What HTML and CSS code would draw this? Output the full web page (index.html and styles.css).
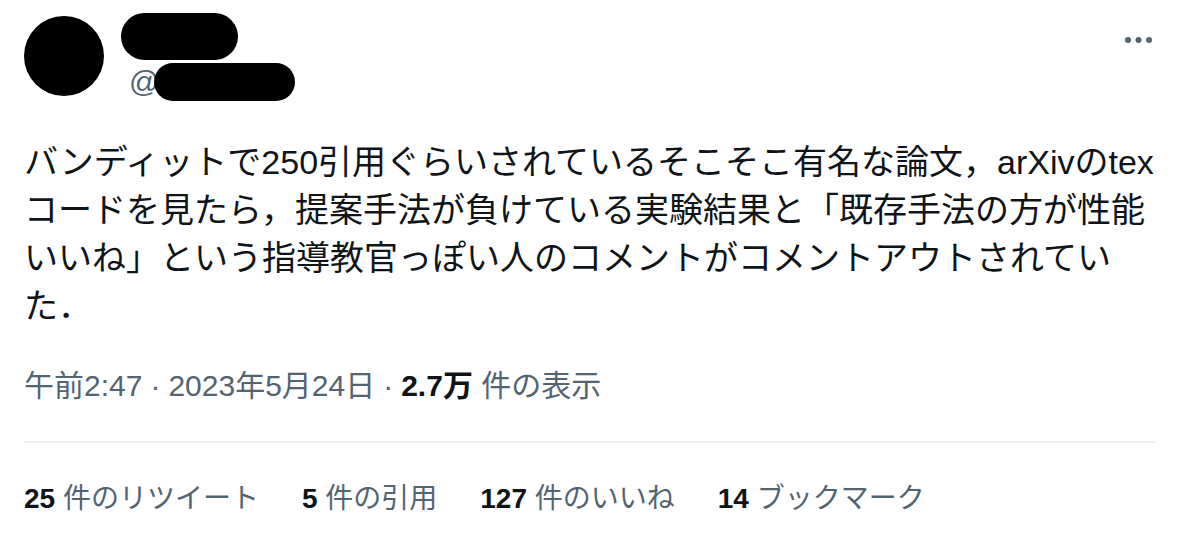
FILE: index.html
```html
<!DOCTYPE html>
<html lang="ja">
<head>
<meta charset="utf-8">
<title>Tweet</title>
<link rel="stylesheet" href="styles.css">
</head>
<body>
<article class="tweet">
  <header class="tweet-header">
    <div class="avatar"></div>
    <div class="user">
      <div class="name-redact"></div>
      <div class="handle-row"><span class="at">@</span><span class="handle-redact"></span></div>
    </div>
    <button class="more" aria-label="その他">
      <svg width="30" height="10" viewBox="0 0 30 10"><circle cx="4" cy="5" r="3"/><circle cx="14.5" cy="5" r="3"/><circle cx="25" cy="5" r="3"/></svg>
    </button>
  </header>
  <p class="tweet-text">バンディットで250引用ぐらいされているそこそこ有名な論文，arXivのtexコードを見たら，提案手法が負けている実験結果と「既存手法の方が性能いいね」という指導教官っぽい人のコメントがコメントアウトされていた．</p>
  <div class="meta">
    <span>午前2:47</span><span class="dot">·</span><span>2023年5月24日</span><span class="dot">·</span><span><b class="strong">2.7万</b> 件の表示</span>
  </div>
  <div class="divider"></div>
  <div class="stats">
    <span class="stat"><b class="strong">25</b> 件のリツイート</span>
    <span class="stat"><b class="strong">5</b> 件の引用</span>
    <span class="stat"><b class="strong">127</b> 件のいいね</span>
    <span class="stat"><b class="strong">14</b> ブックマーク</span>
  </div>
</article>
</body>
</html>
```

FILE: styles.css
```css
html, body {
  margin: 0;
  padding: 0;
  background: #ffffff;
}

body {
  font-family: "Liberation Sans", "Noto Sans CJK JP", sans-serif;
  color: #0f1419;
}

.tweet {
  padding: 16px 22px 0 24px;
}

.tweet-header {
  display: flex;
  align-items: flex-start;
}

.avatar {
  width: 80px;
  height: 80px;
  border-radius: 50%;
  background: #000;
  flex: none;
}

.user {
  margin-left: 17px;
  flex: 1;
}

.name-redact {
  width: 117px;
  height: 47px;
  border-radius: 24px;
  background: #000;
  margin-top: -3px;
}

.handle-row {
  display: flex;
  align-items: center;
  margin-top: 3px;
}

.at {
  color: #536471;
  font-size: 30px;
  line-height: 38px;
  margin-left: 8px;
}

.handle-redact {
  width: 141px;
  height: 38px;
  border-radius: 19px;
  background: #000;
  margin-left: -5px;
}

.more {
  border: 0;
  background: none;
  padding: 0;
  margin: 19px 2px 0 0;
  fill: #536471;
  line-height: 0;
}

.tweet-text {
  margin: 37px 0 0 0;
  width: 1140px;
  font-size: 34px;
  line-height: 48px;
  color: #0f1419;
  word-break: normal;
  line-break: strict;
}

.meta {
  margin-top: 36px;
  font-size: 30px;
  line-height: 40px;
  color: #536471;
}

.dot {
  margin: 0 8px;
}

.strong {
  font-weight: 700;
  color: #0f1419;
}

.divider {
  margin-top: 35px;
  height: 2px;
  background: #eff3f4;
}

.stats {
  display: flex;
  margin-top: 38px;
  font-size: 28px;
  line-height: 36px;
  color: #536471;
}

.stat {
  margin-right: 43px;
}
```
